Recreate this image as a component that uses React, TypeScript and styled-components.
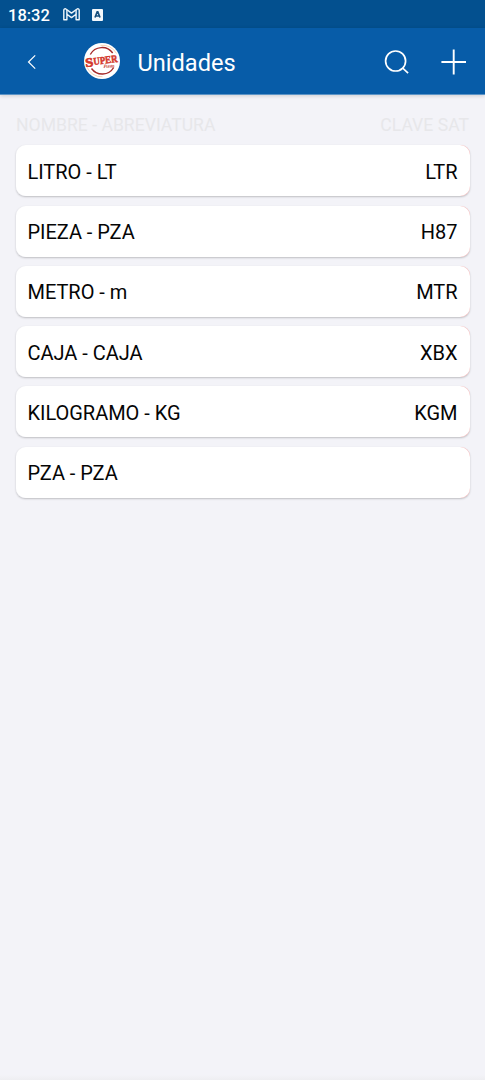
import React from "react";
import styled, { createGlobalStyle } from "styled-components";

const GlobalStyle = createGlobalStyle`
  * { box-sizing: border-box; }
  html, body { margin: 0; padding: 0; background: #f3f3f8; }
  body { font-family: Roboto, "Liberation Sans", sans-serif; overflow: hidden; }
  svg { display: block; flex: none; }
`;

const Screen = styled.div`
  display: flex;
  flex-direction: column;
  width: 100%;
  height: 1080px;
  background: #f3f3f8;
`;

const StatusBar = styled.div`
  display: flex;
  align-items: center;
  height: 28px;
  padding: 1px 8px 0;
  background: #03508f;
  color: #fff;
`;

const Clock = styled.span`
  width: 55px;
  padding-top: 2px;
  font-size: 16.5px;
  line-height: 20px;
  font-weight: 500;
  white-space: nowrap;
`;

const StatusIcons = styled.div`
  display: flex;
  align-items: center;
  gap: 12px;
`;

const AppBar = styled.header`
  display: flex;
  align-items: center;
  height: 67px;
  padding: 1px 18px 0 26px;
  background: #075ca8;
  border-bottom: 1px solid #5b93c6;
  box-shadow: 0 1px 4px rgba(0, 0, 0, 0.16);
  color: #fff;
`;

const IconButton = styled.button<{ $width: number }>`
  display: flex;
  justify-content: center;
  width: ${(p) => p.$width}px;
  padding: 0;
  border: 0;
  background: none;
  color: inherit;
`;

const Brand = styled.div`
  display: flex;
  align-items: center;
  flex: 1;
  margin-left: 45px;
  gap: 17.5px;
`;

const Title = styled.h1`
  margin: 0;
  padding-top: 2px;
  font-size: 23.6px;
  line-height: 28px;
  font-weight: 400;
`;

const Actions = styled.div`
  display: flex;
  align-items: center;
  gap: 31px;
`;

const Content = styled.main`
  flex: 1;
  padding: 20px 15.5px 0;
`;

const ColumnTitles = styled.div`
  display: flex;
  justify-content: space-between;
  height: 30.3px;
  padding: 0 0.5px;
  font-size: 17.6px;
  line-height: 20px;
  color: #e7e7ea;
`;

const List = styled.div`
  display: flex;
  flex-direction: column;
  gap: 9.3px;
`;

const SwipeTrack = styled.div`
  border-radius: 9px;
  background: linear-gradient(to right, #ececf0 50%, #f5b4b4 50%);
  box-shadow: 0 1px 2px rgba(0, 0, 0, 0.22);
`;

const Row = styled.div`
  display: flex;
  align-items: center;
  justify-content: space-between;
  height: 51px;
  padding: 2px 12px 0;
  border-radius: 10px;
  background: #fff;
  color: #050505;
  font-size: 20px;
  line-height: 24px;
  letter-spacing: -0.03px;
`;

const BottomShade = styled.div`
  height: 5px;
  background: linear-gradient(#f3f3f8, #eeeef1);
`;

const units = [
  { name: "LITRO - LT", code: "LTR" },
  { name: "PIEZA - PZA", code: "H87" },
  { name: "METRO - m", code: "MTR" },
  { name: "CAJA - CAJA", code: "XBX" },
  { name: "KILOGRAMO - KG", code: "KGM" },
  { name: "PZA - PZA", code: "" },
];

const MailIcon = () => (
  <svg width="17" height="13" viewBox="0 0 17 13" fill="none" stroke="#eef5fa" strokeWidth="1.4" strokeLinejoin="round">
    <path d="M.8 2.2C.8.8 2.2.3 3.3 1.2L8.5 5.1l5.2-3.9c1.1-.9 2.5-.4 2.5 1v9.6h-3.1V6.2L8.5 9.6 3.9 6.2v5.6H.8Z" />
    <path d="M3.9 2v4.2M13.1 2v4.2" />
  </svg>
);

const LetterIcon = () => (
  <svg width="11" height="12" viewBox="0 0 11 12">
    <rect width="11" height="12" rx="1" fill="#f3f8fc" />
    <path d="M3 8.5 5.2 2.8h.6L8 8.5M3.8 7h3.4" fill="none" stroke="#174f7d" strokeWidth="1.7" />
  </svg>
);

const Logo = () => (
  <svg width="37" height="37" viewBox="0 0 37 37" overflow="visible">
    <circle cx="19" cy="18" r="18" fill="#fff" />
    <g fill="none">
      <path d="M7.3 11.5A13.3 13.3 0 0 1 29.7 10M8.5 25.5A13.3 13.3 0 0 0 30.7 24.5" stroke="#a52a2a" strokeWidth="1.4" />
      <path d="M17.5 2.3A16 16 0 0 1 33.5 10.5M3.7 23.5A16 16 0 0 0 19.5 33.8" stroke="#f1c7a3" strokeWidth=".8" />
    </g>
    <g transform="rotate(-7 18.5 18.5)" fill="#d4382c" fontFamily="'Liberation Serif', serif" fontWeight="700">
      <text x="2.2" y="22" fontSize="12.5" textLength="8" lengthAdjust="spacingAndGlyphs" stroke="#d4382c" strokeWidth=".7">S</text>
      <text x="10.4" y="21" fontSize="10.5" textLength="24.2" lengthAdjust="spacingAndGlyphs" stroke="#d4382c" strokeWidth=".5">UPER</text>
    </g>
    <text x="20.5" y="25" transform="rotate(-3 20 24)" fill="#c94a3d" fontFamily="'Liberation Serif', serif" fontStyle="italic" fontWeight="700" fontSize="5" textLength="11">Punto</text>
  </svg>
);

const BackIcon = () => (
  <svg width="12" height="16" viewBox="0 0 12 16" fill="none" stroke="currentColor" strokeWidth="1.2">
    <path d="M9.2 1.3 2.5 8l6.7 6.7" />
  </svg>
);

const SearchIcon = () => (
  <svg width="26" height="26" viewBox="0 0 26 26" fill="none" stroke="currentColor" strokeWidth="1.7">
    <circle cx="11.6" cy="12" r="10" />
    <path d="m18.6 19 5.5 5.2" />
  </svg>
);

const PlusIcon = () => (
  <svg width="26" height="26" viewBox="0 0 26 26" fill="none" stroke="currentColor" strokeWidth="1.9">
    <path d="M12.7.6v24.8M.4 13h24.6" />
  </svg>
);

export default function App() {
  return (
    <Screen>
      <GlobalStyle />
      <StatusBar>
        <Clock>18:32</Clock>
        <StatusIcons>
          <MailIcon />
          <LetterIcon />
        </StatusIcons>
      </StatusBar>
      <AppBar>
        <IconButton $width={12} aria-label="Volver"><BackIcon /></IconButton>
        <Brand>
          <Logo />
          <Title>Unidades</Title>
        </Brand>
        <Actions>
          <IconButton $width={26} aria-label="Buscar"><SearchIcon /></IconButton>
          <IconButton $width={26} aria-label="Agregar"><PlusIcon /></IconButton>
        </Actions>
      </AppBar>
      <Content>
        <ColumnTitles>
          <span>NOMBRE - ABREVIATURA</span>
          <span>CLAVE SAT</span>
        </ColumnTitles>
        <List>
          {units.map((unit) => (
            <SwipeTrack key={unit.name}>
              <Row>
                <span>{unit.name}</span>
                <span>{unit.code}</span>
              </Row>
            </SwipeTrack>
          ))}
        </List>
      </Content>
      <BottomShade />
    </Screen>
  );
}
